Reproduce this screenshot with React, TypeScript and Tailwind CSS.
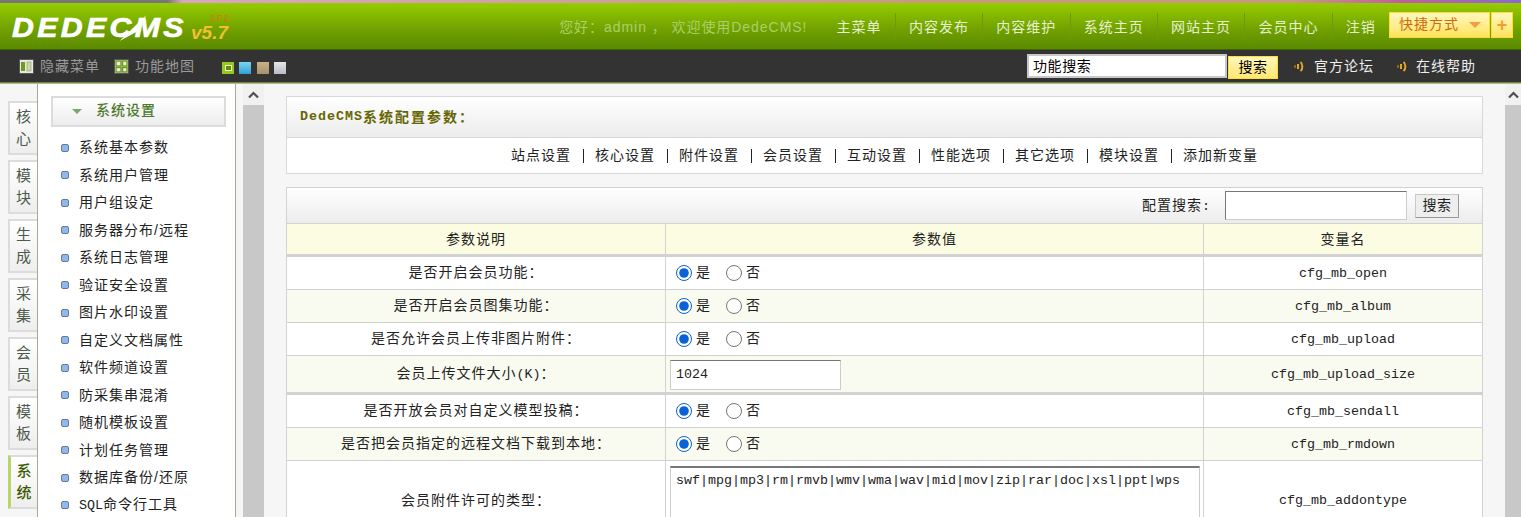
import React from "react";

const cjk = "font-['Liberation_Sans','Noto_Sans_CJK_SC',sans-serif]";

function M({ children, className = "" }: { children: React.ReactNode; className?: string }) {
  return <span className={"font-['Liberation_Mono',monospace] text-[13.33px] tracking-normal " + className}>{children}</span>;
}

function Sep() {
  return <span className="h-[26px] w-px bg-[#6f9a10]" />;
}

function Nav({ label }: { label: string }) {
  return <span className="px-[13.2px] pt-[3px] text-[14px] text-[#e6f0d0] whitespace-nowrap">{label}</span>;
}

function Speaker() {
  return (
    <svg width="11" height="11" viewBox="0 0 11 11" className="shrink-0">
      <rect x="0" y="4" width="2" height="3" fill="#8a6a10" />
      <rect x="3" y="3" width="2" height="5" fill="#e0a820" />
      <path d="M6.5 1 C9 3 9 8 6.5 10" fill="none" stroke="#e0a820" strokeWidth="2" />
    </svg>
  );
}

const tabs = [
  ["核", "心"],
  ["模", "块"],
  ["生", "成"],
  ["采", "集"],
  ["会", "员"],
  ["模", "板"],
];

const menu: React.ReactNode[] = [
  "系统基本参数",
  "系统用户管理",
  "用户组设定",
  "服务器分布/远程",
  "系统日志管理",
  "验证安全设置",
  "图片水印设置",
  "自定义文档属性",
  "软件频道设置",
  "防采集串混淆",
  "随机模板设置",
  "计划任务管理",
  "数据库备份/还原",
  <>
    <M>SQL</M>命令行工具
  </>,
];

const links = ["站点设置", "核心设置", "附件设置", "会员设置", "互动设置", "性能选项", "其它选项", "模块设置", "添加新变量"];

function Radios({ name }: { name: string }) {
  return (
    <div className="flex items-center">
      <input type="radio" name={name} defaultChecked className="m-0 h-4 w-4 accent-[#0b62d6]" />
      <span className="ml-1 text-[14px]">是</span>
      <input type="radio" name={name} className="m-0 ml-[15px] h-4 w-4" />
      <span className="ml-1 text-[14px]">否</span>
    </div>
  );
}

function Row({
  label,
  name,
  value,
  alt,
  h = "h-[33px]",
  thick,
}: {
  label: React.ReactNode;
  name: string;
  value: React.ReactNode;
  alt?: boolean;
  h?: string;
  thick?: boolean;
}) {
  return (
    <div
      className={
        "grid grid-cols-[379px_538px_1fr] shrink-0 border-b border-[#d2d2d2] " +
        h +
        (alt ? " bg-[#f9fbf0]" : " bg-white") +
        (thick ? " border-b-[3px]" : "")
      }
    >
      <div className="flex items-center justify-center border-r border-[#d2d2d2] pb-[1px] text-[14px]">{label}</div>
      <div className="flex items-center border-r border-[#d2d2d2] pl-[4px]">{value}</div>
      <div className="flex items-center justify-center pt-[1px]">
        <M>{name}</M>
      </div>
    </div>
  );
}

function R({ name }: { name: string }) {
  return (
    <div className="mb-[1px] pl-[6px]">
      <Radios name={name} />
    </div>
  );
}

function Scroll({ narrow }: { narrow?: boolean }) {
  return (
    <div className={"flex shrink-0 flex-col " + (narrow ? "w-[16px]" : "w-[21px]")}>
      <div className="flex h-[21px] items-center justify-center bg-[#f1f1f1]">
        <svg width="11" height="8" viewBox="0 0 11 8">
          <path d="M1 6.5 L5.5 2 L10 6.5" fill="none" stroke="#505050" strokeWidth="2.2" />
        </svg>
      </div>
      <div className="flex-1 bg-[#c8c8c8]" />
    </div>
  );
}

export default function App() {
  return (
    <div className={"flex h-[517px] flex-col overflow-hidden bg-[#f6f6f6] tracking-[1px] text-[#222] " + cjk}>
      <div className="h-[3px] shrink-0 bg-[linear-gradient(90deg,#777_0%,#777_11%,#d9a5c5_12%,#c79a80_60%,#c79a80_85%,#c25fa0_92%,#8a6ad0_100%)]" />

      <header className="flex h-[47px] shrink-0 items-center justify-between border-b border-[#3f6600] bg-[linear-gradient(180deg,#96cc00_0%,#6f9f00_60%,#5a8a00_100%)] pr-2">
        <div className="flex items-end pl-[12px] pt-[3px]">
          <span className="relative mr-[19px] origin-left scale-x-[1.12] font-['Liberation_Sans',sans-serif] text-[27px] leading-[28px] font-black italic tracking-[3px] text-white [-webkit-text-stroke:0.7px_#fff]">
            DEDECMS
            <svg width="24" height="26" viewBox="0 0 24 26" className="absolute left-[96px] top-[1px]">
              <polygon points="0,26 24,0 15,17" fill="#fff" />
            </svg>
          </span>
          <span className="relative top-[3px] ml-[4px] font-['Liberation_Sans',sans-serif] text-[19px] leading-[24px] font-bold italic tracking-normal text-[#f0c030]">
            v5.7
            <span className="absolute -right-[2px] -top-[8px] text-[9px] leading-[10px] font-normal not-italic tracking-[1px] text-[#e07018]">SP2</span>
          </span>
        </div>
        <div className="flex items-center">
          <span className="mr-[16px] pt-[3px] text-[14px] whitespace-nowrap tracking-[0.95px] text-[#a8d068]">您好：admin ， 欢迎使用DedeCMS!</span>
          <Nav label="主菜单" />
          <Sep />
          <Nav label="内容发布" />
          <Sep />
          <Nav label="内容维护" />
          <Sep />
          <Nav label="系统主页" />
          <Sep />
          <Nav label="网站主页" />
          <Sep />
          <Nav label="会员中心" />
          <Sep />
          <Nav label="注销" />
          <div className="mb-[3px] flex h-[26px] w-[101px] items-center border border-[#ffdd33] bg-[linear-gradient(180deg,#fff7c0_0%,#ffeb80_65%,#ffe25a_100%)] pl-[9px] pr-[12px] text-[14px] text-[#d06a10]">
            <span className="whitespace-nowrap">快捷方式</span>
            <span className="ml-[10px] h-0 w-0 border-x-[6px] border-t-[6px] border-x-transparent border-t-[#f0a040]" />
          </div>
          <div className="mb-[3px] ml-[1px] flex h-[26px] w-[22px] items-center justify-center border border-[#ffdd33] bg-[linear-gradient(180deg,#fff7c0_0%,#ffeb80_65%,#ffe25a_100%)] text-[18px] leading-none font-bold tracking-normal text-[#f0a030]">
            +
          </div>
        </div>
      </header>

      <div className="flex h-[32px] shrink-0 items-center justify-between bg-[#333] pl-[19px] pr-[45px]">
        <div className="flex items-center text-[14px] text-[#9a9a9a]">
          <svg width="15" height="15" viewBox="0 0 15 15" className="shrink-0">
            <rect x="0.5" y="0.5" width="14" height="14" fill="#e8e8e0" stroke="#555" />
            <rect x="2" y="3" width="4" height="9" fill="#6f9a20" />
            <rect x="8" y="3" width="4" height="9" fill="#c8d8b0" stroke="#8aa060" strokeWidth="0.6" />
          </svg>
          <span className="ml-[6px]">隐藏菜单</span>
          <svg width="15" height="15" viewBox="0 0 15 15" className="ml-[14px] shrink-0">
            <rect x="0.5" y="0.5" width="14" height="14" fill="#e8ecd8" stroke="#555" />
            <rect x="2" y="2" width="5" height="5" fill="none" stroke="#6f9a20" strokeWidth="1.4" />
            <rect x="8.5" y="2" width="4.5" height="5" fill="none" stroke="#6f9a20" strokeWidth="1.4" />
            <rect x="2" y="8.5" width="5" height="4.5" fill="none" stroke="#6f9a20" strokeWidth="1.4" />
            <rect x="8.5" y="8.5" width="4.5" height="4.5" fill="none" stroke="#6f9a20" strokeWidth="1.4" />
          </svg>
          <span className="ml-[6px]">功能地图</span>
          <div className="ml-[27px] mt-[3px] flex items-center gap-[5.3px]">
            <span className="flex h-[12px] w-[12px] items-center justify-center bg-[#96c820]">
              <span className="h-[6px] w-[7px] border border-[#eef6c0] bg-[#5f8a10]" />
            </span>
            <span className="h-[12px] w-[12px] bg-[linear-gradient(180deg,#7cd4f0,#30a0d8)]" />
            <span className="h-[12px] w-[12px] bg-[linear-gradient(180deg,#c8b08a,#a8926a)]" />
            <span className="h-[12px] w-[12px] bg-[linear-gradient(180deg,#e4e6e8,#b8bcc4)]" />
          </div>
        </div>
        <div className="flex items-center text-[14px]">
          <div className="flex h-[24px] w-[200px] items-center border-2 border-[#c8c8c8] bg-white pl-[4px] text-black tracking-[0.6px]">功能搜索</div>
          <div className="ml-px mt-[2px] flex h-[23px] w-[50px] items-center justify-center border border-[#ffdd33] bg-[linear-gradient(180deg,#fff6c0,#ffe870)] text-black tracking-[0.6px]">
            搜索
          </div>
          <span className="ml-[16px]">
            <Speaker />
          </span>
          <span className="ml-[9px] text-[#eeeeee]">官方论坛</span>
          <span className="ml-[23px]">
            <Speaker />
          </span>
          <span className="ml-[8px] text-[#eeeeee]">在线帮助</span>
        </div>
      </div>
      <div className="h-[2px] shrink-0 bg-[linear-gradient(180deg,#55632c,#c9dca0)]" />

      <div className="flex min-h-0 flex-1">
        <div className="flex w-[37px] shrink-0 flex-col items-end gap-[5px] pt-[17px]">
          {tabs.map((t, i) => (
            <div
              key={i}
              className="flex h-[54px] w-[29px] shrink-0 flex-col items-center justify-center gap-[2px] border-2 border-r-0 border-[#dcdcdc] bg-[linear-gradient(180deg,#ffffff,#eeeeee)] text-[15px] leading-[20px] tracking-normal text-[#4b5a4b]"
            >
              <span>{t[0]}</span>
              <span>{t[1]}</span>
            </div>
          ))}
          <div className="flex h-[54px] w-[29px] shrink-0 flex-col items-center justify-center gap-[2px] border-y-2 border-l-[3px] border-y-[#dcdcdc] border-l-[#b6d66a] bg-[linear-gradient(180deg,#ffffff,#eeeeee)] text-[15px] leading-[20px] font-medium tracking-normal text-[#3c5a00]">
            <span>系</span>
            <span>统</span>
          </div>
        </div>

        <aside className="w-[199px] shrink-0 overflow-hidden border-x border-[#a8aa98] bg-white pl-[13px] pt-[12px]">
          <div className="flex h-[31px] w-[175px] items-center border-2 border-[#dcdcdc] bg-[linear-gradient(180deg,#ffffff,#ececec)] pb-[2px] pl-[19px] text-[14px] font-medium text-[#4e7a30]">
            <span className="mt-[2px] h-0 w-0 border-x-[5px] border-t-[5px] border-x-transparent border-t-[#7aa868]" />
            <span className="ml-[14px]">系统设置</span>
          </div>
          <ul className="mt-[7px]">
            {menu.map((m, i) => (
              <li key={i} className="flex h-[27.5px] items-center pl-[10px] text-[14px] whitespace-nowrap">
                <span className="mr-[10px] h-[8px] w-[8px] shrink-0 rounded-[2px] border border-[#6b7a90] bg-[#8fb8ee]" />
                <span>{m}</span>
              </li>
            ))}
          </ul>
        </aside>

        <div className="w-[7px] shrink-0" />
        <Scroll />

        <main className="min-w-0 flex-1 overflow-hidden px-[22px] pt-[12px]">
          <section className="border border-[#d8d8d8] bg-white">
            <div className="flex h-[41px] items-center border-b border-[#d8d8d8] bg-[linear-gradient(180deg,#ffffff,#ececec)] pl-[13px] text-[14px] font-bold tracking-[2px] text-[#666600]">
              <span className="font-['Liberation_Mono',monospace] text-[13.33px] font-bold tracking-[1px]">DedeCMS</span>系统配置参数：
            </div>
            <div className="flex h-[35px] items-center justify-center text-[14px]">
              {links.map((l, i) => (
                <React.Fragment key={l}>
                  {i > 0 && <span className="mx-[11.5px] h-[14px] w-px bg-[#222]" />}
                  <span className="whitespace-nowrap">{l}</span>
                </React.Fragment>
              ))}
            </div>
          </section>

          <section className="mt-[13px] border-x border-t border-[#d2d2d2]">
            <div className="flex h-[36px] items-center justify-end border-b border-[#d2d2d2] bg-[linear-gradient(180deg,#ffffff,#ececec)] pr-[23px] text-[14px]">
              <span className="mr-[15px]">
                配置搜索<M>:</M>
              </span>
              <div className="h-[29px] w-[182px] border border-[#cccccc] border-t-[#777] border-l-[#777] bg-white" />
              <div className="ml-[8px] flex h-[24px] w-[44px] items-center justify-center border border-[#c8c8c8] border-r-[#999] border-b-[#999] bg-[#eeeeee] tracking-[0.6px]">
                搜索
              </div>
            </div>
            <div className="grid h-[33px] grid-cols-[379px_538px_1fr] border-b-[3px] border-[#d2d2d2] bg-[#fcfce2] text-[14px]">
              <div className="flex items-center justify-center border-r border-[#d2d2d2]">参数说明</div>
              <div className="flex items-center justify-center border-r border-[#d2d2d2]">参数值</div>
              <div className="flex items-center justify-center">变量名</div>
            </div>
            <Row label="是否开启会员功能：" name="cfg_mb_open" value={<R name="a" />} />
            <Row label="是否开启会员图集功能：" name="cfg_mb_album" alt value={<R name="b" />} />
            <Row label="是否允许会员上传非图片附件：" name="cfg_mb_upload" value={<R name="c" />} />
            <Row
              label={
                <span>
                  会员上传文件大小<M>(K)</M>：
                </span>
              }
              name="cfg_mb_upload_size"
              alt
              thick
              h="h-[39px]"
              value={
                <div className="mt-[2px] flex h-[30px] w-[171px] items-center border border-[#cccccc] border-t-[#777] bg-white pl-[5px]">
                  <M>1024</M>
                </div>
              }
            />
            <Row label="是否开放会员对自定义模型投稿：" name="cfg_mb_sendall" value={<R name="d" />} />
            <Row label="是否把会员指定的远程文档下载到本地：" name="cfg_mb_rmdown" alt value={<R name="e" />} />
            <Row
              label="会员附件许可的类型："
              name="cfg_mb_addontype"
              h="h-[80px]"
              value={
                <textarea
                  readOnly
                  defaultValue="swf|mpg|mp3|rm|rmvb|wmv|wma|wav|mid|mov|zip|rar|doc|xsl|ppt|wps"
                  className="h-[70px] w-[530px] resize-none border border-[#cccccc] border-t-2 border-t-[#777] bg-white pl-[5px] pt-[4px] font-['Liberation_Mono',monospace] text-[13.33px] leading-[18px] tracking-normal outline-none"
                />
              }
            />
          </section>
        </main>

        <Scroll narrow />
      </div>
    </div>
  );
}
